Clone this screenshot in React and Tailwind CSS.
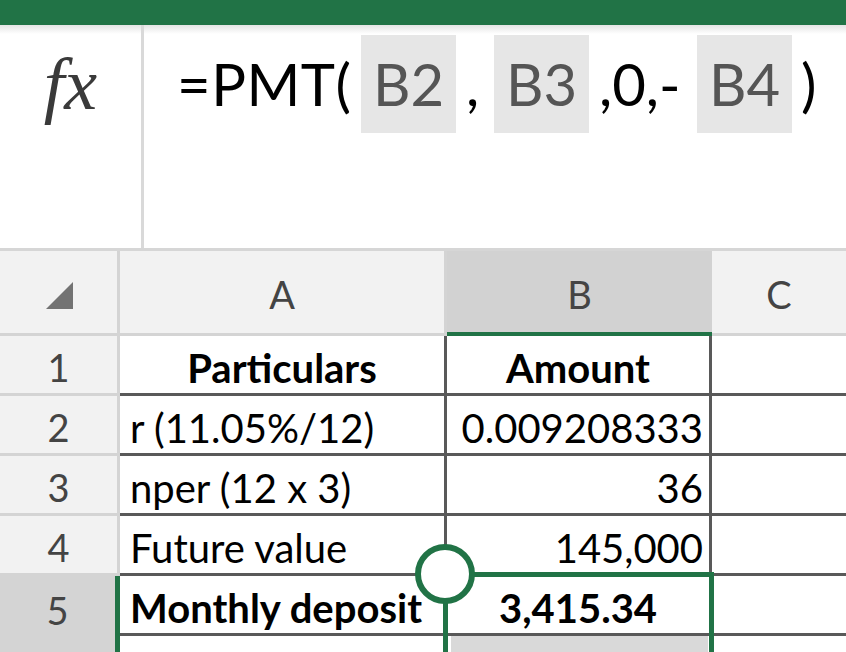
import clsx from 'clsx';

const rows = [
    { n: 1, a: 'Particulars', b: 'Amount', bold: true, aAlign: 'center', bAlign: 'center' },
    { n: 2, a: 'r (11.05%/12)', b: '0.009208333', aAlign: 'left', bAlign: 'right' },
    { n: 3, a: 'nper (12 x 3)', b: '36', aAlign: 'left', bAlign: 'right' },
    { n: 4, a: 'Future value', b: '145,000', aAlign: 'left', bAlign: 'right' },
    { n: 5, a: 'Monthly deposit', b: '3,415.34', bold: true, aAlign: 'left', bAlign: 'center', selected: true },
];

const alignClass = {
    left: 'justify-start pl-[10px]',
    center: 'justify-center',
    right: 'justify-end pr-[6px]',
};

function RefBox({ children }) {
    return (
        <span className="flex h-[98px] w-[95px] shrink-0 items-center justify-center bg-[#e6e6e6] text-[#555]">
            {children}
        </span>
    );
}

function FormulaBar() {
    return (
        <div className="flex h-[223px] bg-[linear-gradient(to_bottom,#e4e4e4,#ffffff_9px)]">
            {/* fx label */}
            <div className="flex w-[144px] shrink-0 justify-center border-r-[3px] border-[#d9d9d9] pt-[22px]">
                <span className="font-['Liberation_Serif',serif] text-[74px] italic leading-none text-[#3a3a3a]">
                    fx
                </span>
            </div>
            {/* formula text */}
            <div className="flex items-center self-start pl-[33px] pt-[10px] text-[58px] leading-none text-black">
                <span className="w-[171px] shrink-0 tracking-[0.5px]">=PMT(</span>
                <span className="ml-[13px]"><RefBox>B2</RefBox></span>
                <span className="ml-[10px] w-[10px]">,</span>
                <span className="ml-[18px]"><RefBox>B3</RefBox></span>
                <span className="ml-[10px] w-[90px]">,0,-</span>
                <span className="ml-[8px]"><RefBox>B4</RefBox></span>
                <span className="ml-[9px]">)</span>
            </div>
        </div>
    );
}

function HeaderRow() {
    return (
        <div className="flex h-[85px] text-[38px] leading-none text-[#444]">
            <div className="flex w-[120px] shrink-0 items-center justify-center border-r-[3px] border-b-[3px] border-[#d4d4d4] bg-[#f2f2f2] pt-[6px]">
                <svg width="27" height="27" viewBox="0 0 27 27" className="ml-[1px]">
                    <polygon points="27,0 27,27 0,27" fill="#737373" />
                </svg>
            </div>
            <div className="flex w-[327px] shrink-0 items-center justify-center border-r-[3px] border-b-[3px] border-[#d4d4d4] bg-[#f2f2f2] pt-[4px]">
                A
            </div>
            <div className="flex w-[265px] shrink-0 items-center justify-center border-b-[4px] border-[#217346] bg-[#d2d2d2] pt-[4px]">
                B
            </div>
            <div className="flex flex-1 items-center justify-center border-b-[3px] border-[#d4d4d4] bg-[#f2f2f2] pt-[4px]">
                C
            </div>
        </div>
    );
}

function DataRow({ row }) {
    return (
        <div className="flex h-[60px] text-[40px] leading-none">
            <div
                className={clsx(
                    'flex w-[120px] shrink-0 items-end justify-center pb-[7px] text-[38px] text-[#444]',
                    row.selected
                        ? 'border-r-[5px] border-[#217346] bg-[#d4d4d4]'
                        : 'border-r-[3px] border-b-[3px] border-[#d4d4d4] bg-[#f2f2f2]'
                )}
            >
                {row.n}
            </div>
            <div
                className={clsx(
                    'flex w-[327px] shrink-0 items-end whitespace-nowrap border-r-[3px] border-b-[3px] border-[#595959] pb-[5px] text-black',
                    alignClass[row.aAlign],
                    row.bold && 'font-bold'
                )}
            >
                {row.a}
            </div>
            <div
                className={clsx(
                    'flex w-[265px] shrink-0 items-end whitespace-nowrap border-r-[3px] border-b-[3px] border-[#595959] pb-[5px] text-black',
                    alignClass[row.bAlign],
                    row.bold && 'font-bold'
                )}
            >
                {row.b}
            </div>
            <div className="flex-1 border-b-[3px] border-[#595959]" />
        </div>
    );
}

export default function App() {
    return (
        <div className="relative h-[652px] w-[846px] overflow-hidden bg-white font-['Lato',sans-serif]">
            <div className="h-[25px] bg-[#217346]" />
            <FormulaBar />

            <div className="border-t-[3px] border-[#d6d6d6]">
                <HeaderRow />
                {rows.map((row) => (
                    <DataRow key={row.n} row={row} />
                ))}
                {/* row 6, partly visible */}
                <div className="flex h-[60px]">
                    <div className="w-[120px] shrink-0 border-r-[5px] border-[#217346] bg-[#d4d4d4]" />
                    <div className="w-[327px] shrink-0" />
                    <div className="w-[265px] shrink-0 px-[4px]">
                        <div className="h-full bg-[#d9d9d9]" />
                    </div>
                    <div className="flex-1" />
                </div>
            </div>

            {/* selected range B5:B6 */}
            <div className="absolute left-[443px] top-[572px] h-[120px] w-[271px] border-[5px] border-[#217346]" />
            {/* selection handle */}
            <div className="absolute left-[415px] top-[544px] h-[60px] w-[60px] rounded-full border-[6px] border-[#217346] bg-white" />
        </div>
    );
}
